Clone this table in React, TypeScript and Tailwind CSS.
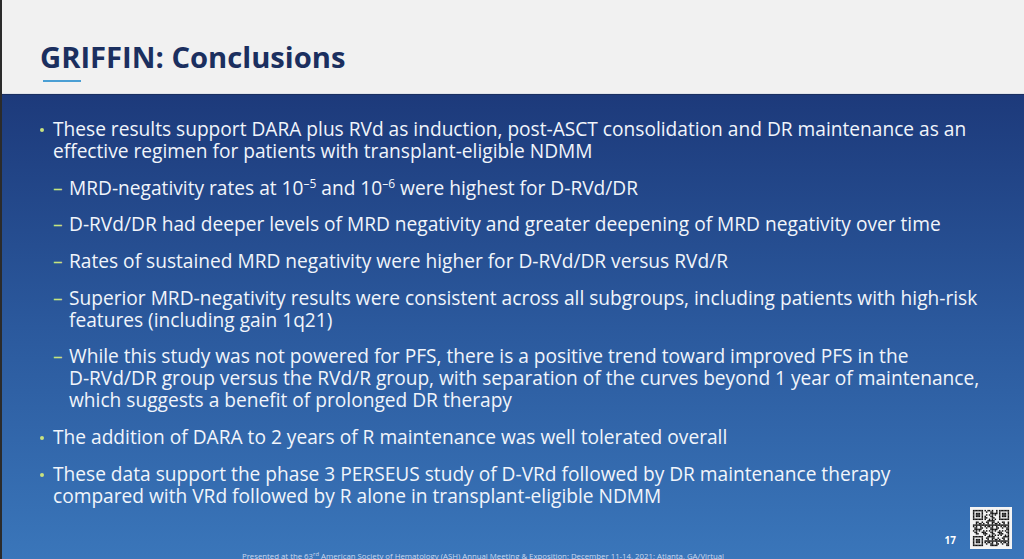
import React from 'react';

const font = { fontFamily: '"Open Sans", "Noto Sans", sans-serif' };

function Sup({ children }: { children: React.ReactNode }) {
  return <span className="relative -top-[7px] text-[12px] leading-none">{children}</span>;
}

function QrCode() {
  const n = 25;
  const cells: React.ReactNode[] = [];
  const inFinder = (x: number, y: number) => {
    const spots = [
      [0, 0],
      [n - 7, 0],
      [0, n - 7],
    ];
    for (const [fx, fy] of spots) {
      if (x >= fx && x < fx + 7 && y >= fy && y < fy + 7) {
        const dx = x - fx;
        const dy = y - fy;
        const ring = Math.min(dx, dy, 6 - dx, 6 - dy);
        return ring === 0 || ring >= 2 ? 1 : 0;
      }
      if (x >= fx - 1 && x <= fx + 7 && y >= fy - 1 && y <= fy + 7) return 0;
    }
    return -1;
  };
  for (let y = 0; y < n; y++) {
    for (let x = 0; x < n; x++) {
      const f = inFinder(x, y);
      const on = f >= 0 ? f === 1 : (x * 73 + y * 151 + x * y * 29) % 11 < 5;
      if (on) cells.push(<rect key={`${x}-${y}`} x={x} y={y} width={1.02} height={1.02} fill="#111" />);
    }
  }
  return (
    <svg width="42" height="42" viewBox="-2 -2 29 29" className="block">
      <rect x="-2" y="-2" width="29" height="29" fill="#f4f4f4" />
      {cells}
    </svg>
  );
}

function Bullet({ children }: { children: React.ReactNode }) {
  return (
    <li className="flex">
      <span className="w-[13px] shrink-0 relative">
        <span className="absolute left-0 top-[10px] w-[4px] h-[4px] rounded-full bg-[#c9e27e]" />
      </span>
      <span>{children}</span>
    </li>
  );
}

function Sub({ children }: { children: React.ReactNode }) {
  return (
    <li className="flex pl-[13px]">
      <span className="w-[16px] shrink-0 text-[#c9e27e]">–</span>
      <span>{children}</span>
    </li>
  );
}

export default function App() {
  return (
    <div className="w-[1024px] h-[559px] overflow-hidden flex flex-col border-l-2 border-[#2b2b2b]" style={font}>
      {/* Title band */}
      <div className="h-[94px] shrink-0 bg-[#f1f1f1] pl-[38px] pt-[40px] border-b border-[#dfe3ea]">
        <h1 className="text-[29.2px] leading-[34px] font-bold text-[#1b2f5f]">GRIFFIN: Conclusions</h1>
        <div className="mt-[6px] ml-[3px] w-[38px] h-[2px] bg-[#4a9fd4]" />
      </div>

      {/* Content */}
      <div className="flex-1 min-h-0 flex flex-col border-t border-[#1a2f60] bg-gradient-to-b from-[#1d3a7b] via-[#2b599d] to-[#3a76ba] text-[#f1f5fb]">
        <ul className="pl-[38px] pt-[23px] flex flex-col gap-[14.7px] text-[19.15px] leading-[22px]">
          <Bullet>
            These results support DARA plus RVd as induction, post-ASCT consolidation and DR maintenance as an
            <br />
            effective regimen for patients with transplant-eligible NDMM
          </Bullet>
          <Sub>
            MRD-negativity rates at 10<Sup>–5</Sup> and 10<Sup>–6</Sup> were highest for D-RVd/DR
          </Sub>
          <Sub>D-RVd/DR had deeper levels of MRD negativity and greater deepening of MRD negativity over time</Sub>
          <Sub>Rates of sustained MRD negativity were higher for D-RVd/DR versus RVd/R</Sub>
          <Sub>
            Superior MRD-negativity results were consistent across all subgroups, including patients with high-risk
            <br />
            features (including gain 1q21)
          </Sub>
          <Sub>
            While this study was not powered for PFS, there is a positive trend toward improved PFS in the
            <br />
            D-RVd/DR group versus the RVd/R group, with separation of the curves beyond 1 year of maintenance,
            <br />
            which suggests a benefit of prolonged DR therapy
          </Sub>
          <Bullet>The addition of DARA to 2 years of R maintenance was well tolerated overall</Bullet>
          <Bullet>
            These data support the phase 3 PERSEUS study of D-VRd followed by DR maintenance therapy
            <br />
            compared with VRd followed by R alone in transplant-eligible NDMM
          </Bullet>
        </ul>

        <div className="flex-1" />

        <div className="flex items-end justify-end gap-[14px] pr-[12px] shrink-0">
          <span className="text-[10px] font-bold leading-[12px] mb-[3px] text-white">17</span>
          <QrCode />
        </div>
        <p className="shrink-0 mt-[2px] pr-[60px] text-center text-[7.8px] leading-[10px] text-[#c9d9ee] whitespace-nowrap">
          Presented at the 63<sup>rd</sup> American Society of Hematology (ASH) Annual Meeting &amp; Exposition; December 11-14, 2021; Atlanta, GA/Virtual
        </p>
      </div>
    </div>
  );
}
